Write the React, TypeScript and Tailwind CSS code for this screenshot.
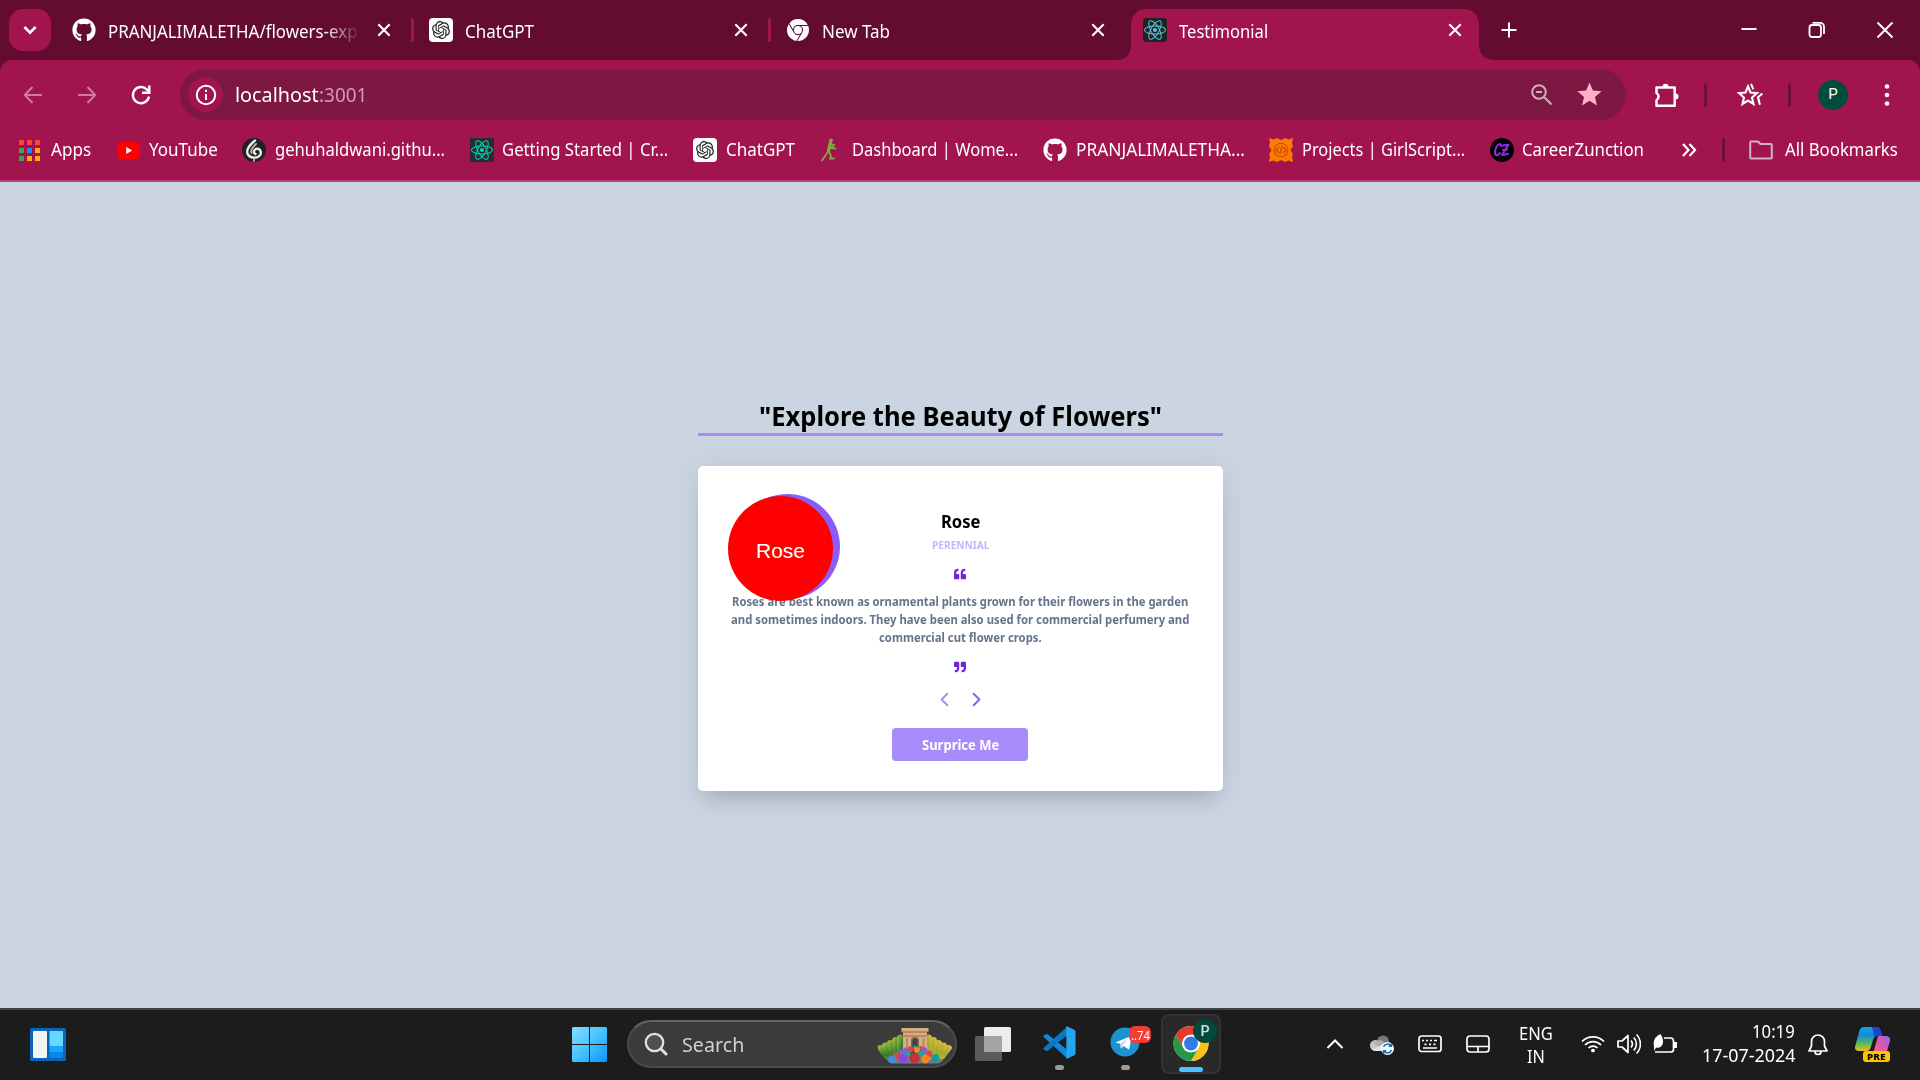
import { useLayoutEffect, useRef, type ReactNode } from "react";
import { SiOpenai, SiGooglechrome, SiReact } from "react-icons/si";
import { FaGithub, FaQuoteLeft, FaQuoteRight } from "react-icons/fa";
import { FiChevronLeft, FiChevronRight } from "react-icons/fi";
import { MdStar } from "react-icons/md";

/** Single line of text condensed or widened to a given width. */
function Fit({ w, className = "", children }: { w: number; className?: string; children: ReactNode }) {
  const ref = useRef<HTMLSpanElement>(null);
  useLayoutEffect(() => {
    const el = ref.current;
    if (el) el.style.transform = `scaleX(${w / el.offsetWidth})`;
  }, [w]);
  return (
    <span className={`block shrink-0 whitespace-nowrap ${className}`} style={{ width: w }}>
      <span ref={ref} className="inline-block origin-left">{children}</span>
    </span>
  );
}

function Close() {
  return (
    <svg className="size-[18px] shrink-0" viewBox="0 0 18 18" fill="none" stroke="#fff" strokeWidth="2.1">
      <path d="M3.3 3.3 14.7 14.7M14.7 3.3 3.3 14.7" />
    </svg>
  );
}

function OpenAi() {
  return (
    <span className="flex size-6 shrink-0 items-center justify-center rounded bg-white">
      <SiOpenai className="size-[18px] text-[#222]" />
    </span>
  );
}

function Tab({ icon, w, title, fade }: { icon: ReactNode; w: number; title: string; fade?: boolean }) {
  return (
    <div className="flex w-[321px] shrink-0 items-center">
      {icon}
      <div className={fade ? "ml-3 flex-1 [mask-image:linear-gradient(90deg,#000_86%,transparent_101%)]" : "ml-3 flex-1"}>
        <Fit w={w} className="mt-[2px] text-[17.5px] leading-6">{title}</Fit>
      </div>
      <div className={fade ? "ml-[17px] flex" : "flex"}><Close /></div>
    </div>
  );
}

function TabDivider() {
  return <div className="mr-[15px] ml-[18px] h-6 w-[3px] shrink-0 rounded-full bg-[#a1144d]" />;
}

function Bookmark({ className, icon, w, label }: { className: string; icon: ReactNode; w: number; label: string }) {
  return (
    <div className={`flex shrink-0 items-center ${className}`}>
      {icon}
      <Fit w={w} className="mb-[2px] text-[17.5px] leading-6">{label}</Fit>
    </div>
  );
}

const appColors = ["#ff4136", "#ff4136", "#ff4136", "#34a853", "#1a8cff", "#fbaf00", "#34a853", "#fbaf00", "#fbaf00"];

function TabStrip() {
  return (
    <div className="flex h-[60px] items-center bg-[#630c30] pl-[9px] text-white">
      <div className="mr-[21px] flex size-[42px] shrink-0 items-center justify-center rounded-[14px] bg-[#a1144d]">
        <svg className="size-[18px]" viewBox="0 0 18 18" fill="none" stroke="#fff" strokeWidth="2.6"><path d="m3.4 6 5.6 5.6L14.600 6" /></svg>
      </div>
      <Tab icon={<FaGithub className="size-6 shrink-0" />} w={250} title="PRANJALIMALETHA/flowers-exp" fade />
      <TabDivider />
      <Tab icon={<OpenAi />} w={69} title="ChatGPT" />
      <TabDivider />
      <Tab icon={<span className="flex size-6 shrink-0 items-center"><SiGooglechrome className="ml-px size-[22px]" /></span>} w={68} title="New Tab" />
      <svg className="ml-2 size-4 shrink-0 self-end" viewBox="0 0 16 16"><path d="M16 0v16H0Q16 16 16 0Z" fill="#a1144d" /></svg>
      <div className="flex h-[51px] w-[348px] shrink-0 self-end rounded-t-[15px] bg-[#a1144d] pb-[9px] pl-3">
        <Tab
          icon={<span className="flex size-6 shrink-0 items-center justify-center rounded-[3px] bg-[#222]"><SiReact className="size-[22px] text-[#58c4dc]" /></span>}
          w={89}
          title="Testimonial"
        />
      </div>
      <svg className="size-4 shrink-0 self-end" viewBox="0 0 16 16"><path d="M0 0v16h16Q0 16 0 0Z" fill="#a1144d" /></svg>
      <svg className="ml-[5px] size-[18px] shrink-0" viewBox="0 0 18 18" fill="none" stroke="#fff" strokeWidth="2"><path d="M9 1.500v15M1.500 9h15" /></svg>
      <div className="ml-auto flex items-center gap-[50px] pr-[26px]">
        <svg className="size-[18px]" viewBox="0 0 18 18" fill="none" stroke="#fff" strokeWidth="2"><path d="M1.500 8h15" /></svg>
        <svg className="size-[18px]" viewBox="0 0 18 18" fill="none" stroke="#fff" strokeWidth="1.800"><rect x="1.500" y="4" width="11.500" height="12" rx="2.500" /><path d="M4.500 1.800h7.500a4 4 0 0 1 4 4V13" /></svg>
        <svg className="size-[18px]" viewBox="0 0 18 18" fill="none" stroke="#fff" strokeWidth="1.900"><path d="m1.500 1.500 15 15M16.500 1.500l-15 15" /></svg>
      </div>
    </div>
  );
}

function Toolbar() {
  return (
    <div className="flex h-[69px] items-center text-white">
      <svg className="ml-[21px] size-6 shrink-0" viewBox="0 0 24 24" fill="none" stroke="#d07c9e" strokeWidth="2"><path d="M21 12H4M11.500 4 3.800 12l7.700 8" /></svg>
      <svg className="ml-[30px] size-6 shrink-0" viewBox="0 0 24 24" fill="none" stroke="#d07c9e" strokeWidth="2"><path d="M3 12h17M12.500 4l7.700 8-7.700 8" /></svg>
      <svg className="ml-[30px] size-6 shrink-0" viewBox="0 0 24 24" fill="none" stroke="#fff" strokeWidth="2.400"><path d="M20 13.500a8.100 8.100 0 1 1-2.300-7.200L20 8.600" /><path d="M20.300 2.500v7.300H13" /></svg>
      <div className="ml-[27px] flex h-[51px] w-[1446px] shrink-0 items-center rounded-full bg-[#7d1842] pl-[8px]">
        <div className="flex size-[35px] items-center justify-center rounded-full bg-[#a1144d]">
          <svg className="size-[22px]" viewBox="0 0 22 22" fill="none" stroke="#fff" strokeWidth="2"><circle cx="11" cy="11" r="9.200" /><path d="M11 10v6M11 5.800v2.300" /></svg>
        </div>
        <Fit w={84} className="mb-px ml-3 text-[20.500px] leading-7">localhost</Fit>
        <Fit w={48} className="mb-px text-[20.500px] leading-7 text-[#d29bb4]">:3001</Fit>
        <svg className="ml-auto size-6" viewBox="0 0 24 24" fill="none" stroke="#cbb0bd" strokeWidth="2"><circle cx="9" cy="9" r="6.800" /><path d="m14 14 7.500 7.500M6 9h6" /></svg>
        <MdStar className="mr-[22px] ml-[21px] size-[29px] text-[#ffafc8]" />
      </div>
      <svg className="ml-[29px] size-6 shrink-0" viewBox="0 0 24 24" fill="none" stroke="#fff" strokeWidth="2.500" strokeLinejoin="round">
        <path d="M1.500 4.500h18.200v18.200H1.500v-5.500a4.200 4.200 0 0 0 0-7.200Z" />
        <path d="M7.500 4a3 3.200 0 0 1 6 0ZM20.500 10.500a3 3 0 0 1 0 6Z" fill="#fff" stroke="none" />
      </svg>
      <div className="ml-[25px] h-6 w-[3px] rounded-full bg-[#6f0f39]" />
      <svg className="ml-[28px] size-7 shrink-0" viewBox="0 0 28 28" fill="none" stroke="#fff" strokeWidth="2.100">
        <path d="m13 5.500 2.500 6 6.500.6-5 4.400 1.500 6.500-5.500-3.500L7.500 23 9 16.500l-5-4.400 6.500-.6Z" /><path d="m16 2.800 2.300 5.500M27.300 12.500l-4.300 3.800 1.900 7.500" />
      </svg>
      <div className="ml-[25px] h-6 w-[3px] rounded-full bg-[#6f0f39]" />
      <div className="ml-[27px] flex size-[30px] items-center justify-center rounded-full bg-[#004d40] pb-px font-[Roboto] text-[15px]">P</div>
      <svg className="ml-[34px] h-6 w-[10px]" viewBox="0 0 10 24" fill="#fff"><circle cx="5" cy="3.500" r="2.300" /><circle cx="5" cy="12" r="2.300" /><circle cx="5" cy="20.500" r="2.300" /></svg>
    </div>
  );
}

function Bookmarks() {
  return (
    <div className="flex h-[51px] items-center pb-[9px] text-white">
      <Bookmark
        className="ml-[19px] gap-[11px]"
        w={40}
        label="Apps"
        icon={
          <span className="grid grid-cols-3 gap-[3px]">
            {appColors.map((c, i) => <span key={i} className="size-[5px]" style={{ background: c }} />)}
          </span>
        }
      />
      <Bookmark
        className="ml-[26px] gap-[9px]"
        w={69}
        label="YouTube"
        icon={<svg className="h-[17px] w-[23px]" viewBox="0 0 23 17"><rect width="23" height="17" rx="4" fill="#f00" /><path d="m9.200 5 6 3.500-6 3.500Z" fill="#fff" /></svg>}
      />
      <Bookmark
        className="ml-[24px] gap-[9px]"
        w={170}
        label="gehuhaldwani.githu..."
        icon={
          <svg className="size-6" viewBox="0 0 24 24" fill="none" strokeLinecap="round">
            <circle cx="12" cy="12" r="12" fill="#222" />
            <path d="M13 2.500C7.500 7 4 11 5.500 15.500c1.500 4.500 9 5.500 12 2.300 2.800-3 .8-7.500-2.800-7-3.200.5-3.700 4.500-1.200 5.200" stroke="#ececec" strokeWidth="2.400" />
            <path d="M14 6c-3 3-6 6-4.500 9M12 20.500v2.500" stroke="#b5b5b5" strokeWidth="1.800" />
          </svg>
        }
      />
      <Bookmark
        className="ml-[25px] gap-2"
        w={166}
        label="Getting Started | Cr..."
        icon={<span className="flex size-6 items-center justify-center bg-[#282c34]"><SiReact className="size-[22px] text-[#09d3ac]" /></span>}
      />
      <Bookmark className="ml-[25px] gap-[9px]" w={69} label="ChatGPT" icon={<OpenAi />} />
      <Bookmark
        className="ml-[25px] gap-[11px]"
        w={166}
        label="Dashboard | Wome..."
        icon={
          <svg className="h-6 w-[21px]" viewBox="0 0 21 24" fill="none" stroke="#83a83e" strokeLinecap="round">
            <path d="M10.500 2.200h1" strokeWidth="3" /><path d="M10.500 5 8.500 13" strokeWidth="3.500" /><path d="M8.500 13 2 22.500M9 14l2 3.500-1 3h4M10 6l4 1-2.500 3 4 .5" strokeWidth="1.800" />
          </svg>
        }
      />
      <Bookmark className="ml-[25px] gap-[9px]" w={169} label="PRANJALIMALETHA..." icon={<FaGithub className="size-6" />} />
      <Bookmark
        className="ml-[24px] gap-[9px]"
        w={163}
        label="Projects | GirlScript..."
        icon={
          <svg className="size-6" viewBox="0 0 24 24" fill="#ff7a00">
            <path d="m0 0 4.500 1.500L8 0l4 2 4-2 3.500 1.500L24 0l-1 5 1 3-2.500 4 2.500 4-1 3 1 5-4.500-1.500L16 24l-4-2-4 2-3.500-1.500L0 24l1-5-1-3 2.500-4L0 8l1-3Z" />
            <circle cx="12" cy="12" r="6.800" fill="none" stroke="#c94f00" strokeWidth="1.100" /><path d="m10 9-3 3 3 3M14 9l3 3-3 3M13 8l-2 8" fill="none" stroke="#c94f00" strokeWidth="1.300" />
          </svg>
        }
      />
      <Bookmark
        className="ml-[25px] gap-2"
        w={122}
        label="CareerZunction"
        icon={
          <svg className="size-6" viewBox="0 0 24 24" fill="none" stroke="#8e2be8" strokeWidth="2" strokeLinecap="round" strokeLinejoin="round">
            <circle cx="12" cy="12" r="12" fill="#000" stroke="none" /><path d="M11 8c0-3-3-2-4 0-2 3-3 8-1 9 1.500.7 3-.5 4-2M12.500 7.500l6-.8L12 17l6-1M13 12l4-.5" />
          </svg>
        }
      />
      <svg className="ml-[37px] size-4" viewBox="0 0 16 16" fill="none" stroke="#fff" strokeWidth="2.200"><path d="m2 2 5.500 6L2 14M8.500 2 14 8l-5.500 6" /></svg>
      <div className="ml-[25px] h-6 w-[3px] rounded-full bg-[#6f0f39]" />
      <Bookmark
        className="ml-[24px] gap-3"
        w={113}
        label="All Bookmarks"
        icon={<svg className="h-[20px] w-6" viewBox="0 0 24 20" fill="none" stroke="#cfb3c0" strokeWidth="2" strokeLinejoin="round"><path d="M1.200 3.500V17.500q0 1 1 1h19.600q1 0 1-1V5q0-1-1-1H11.500L9 1.500H2.200q-1 0-1 1Z" /></svg>}
      />
    </div>
  );
}

function Page() {
  return (
    <main className="flex h-[826px] flex-col items-center bg-[#cbd5e1]">
      <div className="mt-[215px] flex h-[39px] w-[525px] justify-center border-b-[3px] border-[#a78bfa]">
        <Fit w={403} className="text-[27px] leading-[37px] font-bold text-black">"Explore the Beauty of Flowers"</Fit>
      </div>
      <section className="relative mt-[30px] flex h-[325px] w-[525px] flex-col items-center rounded-[5px] bg-white shadow-[0_16px_18px_-9px_rgba(0,0,0,0.12),0_5px_26px_rgba(30,60,90,0.13)]">
        <div className="absolute top-[28px] left-[37px] z-10 size-[105px] rounded-full bg-[#8b5cf6]">
          <div className="relative top-[2px] -left-[7px] flex size-[105px] items-center justify-center rounded-full bg-[#f00] pt-[4px] pl-px font-['Liberation_Sans'] text-[21px] text-white">Rose</div>
        </div>
        <Fit w={39} className="mt-[44px] text-[17px] leading-6 font-bold text-black">Rose</Fit>
        <Fit w={57} className="mt-[3px] text-[10.500px] leading-4 font-bold text-[#c4b5fd]">PERENNIAL</Fit>
        <FaQuoteLeft className="mt-[15px] size-3 text-[#6d28d9]" />
        <div className="mt-[13px] flex flex-col items-center text-[12px] leading-[18px] font-bold text-[#64748b]">
          <Fit w={456}>Roses are best known as ornamental plants grown for their flowers in the garden</Fit>
          <Fit w={458}>and sometimes indoors. They have been also used for commercial perfumery and</Fit>
          <Fit w={163}>commercial cut flower crops.</Fit>
        </div>
        <FaQuoteRight className="mt-[14px] size-3 text-[#6d28d9]" />
        <div className="mt-[15px] flex gap-[9px]">
          <FiChevronLeft className="size-[23px] text-[#a78bfa]" />
          <FiChevronRight className="size-[23px] text-[#8b5cf6]" />
        </div>
        <div className="mt-[17px] flex h-[33px] w-[136px] items-center justify-center rounded bg-[#a78bfa]">
          <Fit w={77} className="text-[13.500px] leading-5 font-bold text-white">Surprice Me</Fit>
        </div>
      </section>
    </main>
  );
}

function BloomArt() {
  const tops = [18, 15.500, 13, 10, 7.500];
  const balls: [number, number, number, string][] = [
    [33, 21, 2, "#d84a4a"], [38, 20.500, 2, "#2aa198"], [44, 21, 2, "#d84a4a"], [29, 23, 2.500, "#8b5fd0"], [34, 23, 2.500, "#d84a4a"], [40, 23, 3, "#ff8a1e"],
    [47, 23, 3, "#8b5fd0"], [25, 25.500, 3, "#8b5fd0"], [31, 27, 3, "#2aa198"], [44, 27, 3.500, "#2aa198"], [52, 27, 3.500, "#d84a4a"], [19, 29, 3.500, "#d84a4a"],
    [15, 32.500, 3.800, "#3a8fe0"], [26, 31.500, 4.600, "#8e44e0"], [37.500, 31, 5.300, "#c93035"], [48.500, 32, 4.300, "#ff851b"], [58.500, 31, 3.900, "#1a9a96"],
  ];
  return (
    <svg className="mt-1 h-[38px] w-[76px]" viewBox="0 0 76 38">
      <defs>
        <linearGradient id="gl" x1="0" y1="0" x2="1" y2="1"><stop stopColor="#b9c23a" /><stop offset=".6" stopColor="#2c7a33" /><stop offset="1" stopColor="#70a33a" /></linearGradient>
        <linearGradient id="gr" x1="1" y1="0" x2="0" y2="1"><stop stopColor="#e6c23c" /><stop offset=".5" stopColor="#a3a632" /><stop offset="1" stopColor="#c6c13a" /></linearGradient>
        <clipPath id="bowl"><path d="M0 0H76V17Q75 29 62 36.500H14Q1 29 0 17Z" /></clipPath>
      </defs>
      <g clipPath="url(#bowl)">
        <path d="M10 27h56v10H10Z" fill="#6f7b8c" />
        {tops.map((y, i) => (
          <g key={i}>
            <path d={`M${i * 5} ${y + 3.500}a3.500 3.500 0 0 1 7 0L${i * 3 + 15} 32H${i * 3 + 8}Z`} fill="url(#gl)" />
            <path d={`M${75 - i * 5} ${y + 3.500}a3.500 3.500 0 0 0-7 0L${60 - i * 3} 32H${67 - i * 3}Z`} fill="url(#gr)" />
          </g>
        ))}
      </g>
      <path d="M24.500 1h27v4h-27ZM26 5h24v17H26Z" fill="#d9ad82" />
      <path d="M24.500 5h27M26 9h24" stroke="#936444" strokeWidth="1" />
      <path d="M34 22V13q0-3 4-3t4 3v9Z" fill="#8a6347" /><path d="M35.500 22V14q0-2.500 2.500-2.500t2.500 2.500v8Z" fill="#38434b" />
      <path d="M30 11v10M46.500 11v10" stroke="#b98a62" strokeWidth="2" />
      {balls.map(([x, y, r, c], i) => <circle key={i} cx={x} cy={y} r={r} fill={c} />)}
    </svg>
  );
}

function Chrome() {
  return (
    <svg className="size-9" viewBox="0 0 48 48">
      <circle cx="24" cy="24" r="24" fill="#fff" />
      <path d="M3.200 12A24 24 0 0 1 44.800 12H24a12 12 0 0 0-10.400 18Z" fill="#e33b2e" />
      <path d="M44.800 12A24 24 0 0 1 24 48L34.400 30A12 12 0 0 0 34.400 18 12 12 0 0 0 24 12Z" fill="#fbc116" />
      <path d="M24 48A24 24 0 0 1 3.200 12L13.600 30A12 12 0 0 0 34.400 30Z" fill="#279847" />
      <circle cx="24" cy="24" r="12" fill="#fff" /><circle cx="24" cy="24" r="9.500" fill="#2f7bea" />
    </svg>
  );
}

function Taskbar() {
  return (
    <footer className="flex h-[72px] items-center border-t-2 border-[#404246] bg-[#1c1c1c] text-white">
      <svg className="mb-px ml-[30px] h-[33px] w-9 shrink-0" viewBox="0 0 36 33">
        <rect width="36" height="33" rx="1.500" fill="#0a64b8" /><rect x="3" y="3" width="14" height="27" rx="1" fill="#f4f4f4" />
        <path d="M19.500 3H33v15H19.500Z" fill="#66d8ff" /><path d="M19.500 18H33v6H19.500Z" fill="#1ba4fb" /><path d="M19.500 24H33v6H19.500Z" fill="#0a85ec" />
      </svg>
      <svg className="mb-px ml-[506px] size-[35px] shrink-0" viewBox="0 0 35 35">
        <defs><linearGradient id="win" x1="0" y1="0" x2="1" y2="1"><stop stopColor="#86dcff" /><stop offset=".5" stopColor="#46c4ff" /><stop offset="1" stopColor="#0a93ff" /></linearGradient></defs>
        <path d="M1.500 0H17v17H0V1.500Q0 0 1.500 0ZM18 0h15.500Q35 0 35 1.500V17H18ZM0 18h17v17H1.500Q0 35 0 33.500ZM18 18h17v15.500q0 1.500-1.500 1.500H18Z" fill="url(#win)" />
      </svg>
      <div className="mb-[2px] ml-5 flex h-12 w-[330px] shrink-0 items-center rounded-full border-2 border-[#4a4a4a] border-t-[#636363] bg-[#3b3b3b] pl-[15px]">
        <svg className="size-6 shrink-0" viewBox="0 0 24 24" fill="none" stroke="#e0e0e0" strokeWidth="2.300" strokeLinecap="round"><circle cx="10.500" cy="10.500" r="8.700" fill="#4b5053" /><path d="m17 17 5 5" strokeWidth="3" /></svg>
        <Fit w={62} className="mt-px ml-[14px] text-[20px] leading-6 text-[#d0d0d0]">Search</Fit>
        <div className="mr-[2px] ml-auto"><BloomArt /></div>
      </div>
      <svg className="mb-[2px] ml-[18px] h-[34px] w-9 shrink-0" viewBox="0 0 36 34">
        <rect x="9" width="27" height="25" rx="1.500" fill="#ececec" /><rect y="9" width="27" height="25" rx="1.500" fill="#5b5b5b" /><path d="M9 9h18v16H9Z" fill="#a4a4a4" />
      </svg>
      <div className="ml-[30px] flex h-[60px] w-9 shrink-0 flex-col items-center self-start pt-4">
        <svg className="size-9" viewBox="0 0 36 36">
          <path d="M.6 11.500 3.500 9q1.200-.8 2.500.2L27 26v9.500Z" fill="#1187d8" /><path d="M.6 24.500 3.500 27q1.200.8 2.500-.2L27 10V.5Z" fill="#0878c6" /><path d="m26 0 8.600 4q1.400.8 1.400 2v24q0 1.200-1.400 2L26 36Z" fill="#24a5f2" />
        </svg>
        <div className="mt-[6px] h-[5px] w-[9px] shrink-0 rounded-full bg-[#9a9a9a]" />
      </div>
      <div className="relative ml-8 flex h-[60px] w-8 shrink-0 flex-col items-center self-start pt-[17px]">
        <svg className="h-[33px] w-8" viewBox="0 0 32 33"><circle cx="16" cy="16.500" r="16" fill="#1c93d1" /><path d="M5.500 17 23.500 9.500 20.500 25l-6-4-3 3-.7-5.500Z" fill="#fff" /><path d="m11.500 18 8.500-6-6.500 7.500-2 4Z" fill="#bcd7e8" /></svg>
        <div className="mt-[8px] h-[5px] w-[9px] shrink-0 rounded-full bg-[#9a9a9a]" />
        <div className="absolute top-4 left-5 flex h-[17px] w-[22px] items-center justify-center rounded-[6px] bg-[#f23c34]"><Fit w={19} className="text-[13px] leading-4">..74</Fit></div>
      </div>
      <div className="relative mt-1 ml-5 flex size-[60px] shrink-0 flex-col items-center self-start rounded-lg border-2 border-[#343434] bg-[#292929] pt-[10px]">
        <Chrome />
        <div className="mt-[6px] h-[5px] w-6 shrink-0 rounded-full bg-[#4cc2ff]" />
        <div className="absolute top-[3px] left-[30px] flex size-6 items-center justify-center rounded-full bg-[#02483c] font-[Roboto] text-[14px] font-medium text-[#cfe0dc]">P</div>
      </div>
      <svg className="mb-[2px] ml-[105px] h-[10px] w-[18px] shrink-0" viewBox="0 0 18 10" fill="none" stroke="#fff" strokeWidth="2"><path d="m1.500 9 7.500-7.500L16.500 9" /></svg>
      <svg className="ml-[26px] h-5 w-6 shrink-0" viewBox="0 0 24 20">
        <circle cx="13" cy="6.500" r="6" fill="#777" /><circle cx="5.500" cy="10.500" r="5.500" fill="#c8c8c8" /><path d="m2 7 9-2 8 6-8 3Z" fill="#b0b0b0" /><path d="m2 14.500 11-5 5 6.500H5.500Z" fill="#e4e4e4" />
        <circle cx="17.500" cy="13.500" r="6.500" fill="#fff" /><path d="M13.500 12a4.300 4.300 0 0 1 7.500-1.200M21.500 15a4.300 4.300 0 0 1-7.500 1.200M21.500 8.500v2.800h-2.800M13.500 18.500v-2.800h2.800" fill="none" stroke="#1268b8" strokeWidth="1.500" />
      </svg>
      <svg className="mb-[2px] ml-6 h-[18px] w-6 shrink-0" viewBox="0 0 24 18" fill="none" stroke="#fff" strokeWidth="1.700"><rect x="1" y="1" width="22" height="15.500" rx="2.500" /><path d="M4 5.500h2M8 5.500h2M12 5.500h2M16 5.500h3M6.500 9.300h2M11 9.300h2M15.500 9.300h2M5 13h14" /></svg>
      <svg className="mb-[2px] ml-6 h-[18px] w-6 shrink-0" viewBox="0 0 24 18" fill="none" stroke="#fff" strokeWidth="1.700"><rect x="1" y="1" width="22" height="16" rx="3" /><path d="M1 11.500h22M12 11.500V17" /></svg>
      <div className="ml-[29px] flex w-[34px] shrink-0 flex-col items-center text-[18px] leading-[23px]"><Fit w={34}>ENG</Fit><Fit w={18}>IN</Fit></div>
      <svg className="mb-[2px] ml-[28px] h-[18px] w-6 shrink-0" viewBox="0 0 24 18" fill="none" stroke="#fff" strokeWidth="1.700"><path d="M1 6.500a15.500 15.500 0 0 1 22 0M4 10a11.300 11.300 0 0 1 16 0M7.500 13a6.500 6.500 0 0 1 9 0" /><circle cx="12" cy="15.500" r="1.500" fill="#fff" stroke="none" /><circle cx="12" cy="15.500" r="1" /></svg>
      <svg className="mb-[2px] ml-3 h-[22px] w-6 shrink-0" viewBox="0 0 24 22" fill="none" stroke="#fff" strokeWidth="1.700" strokeLinejoin="round"><path d="M1 8h4l6-5.500v17L5 14H1ZM14 7.500a5.500 5.500 0 0 1 0 7M16.800 4.500a9.500 9.500 0 0 1 0 13M19.500 1.500a13.500 13.500 0 0 1 0 19" /></svg>
      <svg className="mb-[4px] ml-3 h-[21px] w-6 shrink-0" viewBox="0 0 24 21" fill="none" stroke="#fff" strokeWidth="1.700"><path d="M11 5h6.500q3 0 3 3v8.500q0 2.500-3 2.500H2" /><path d="M21 9.500h3v5h-3" fill="#fff" strokeWidth="1" /><path d="M1 13Q-1 5 7.500 1q3.500 5 2.200 10Q8 15.500 3 14.500L1 18Z" fill="#fff" stroke="none" /></svg>
      <div className="mb-[4px] ml-[25px] flex w-[93px] shrink-0 flex-col items-end text-[17.500px] leading-6"><Fit w={43}>10:19</Fit><Fit w={93}>17-07-2024</Fit></div>
      <svg className="mb-[2px] ml-[13px] h-[23px] w-5 shrink-0" viewBox="0 0 20 23" fill="none" stroke="#fff" strokeWidth="1.700" strokeLinejoin="round"><path d="M3.500 13V8.500a6.500 6.500 0 0 1 13 0V13l2.500 5H1ZM7 18.500a3 3 0 0 0 6 0" /></svg>
      <div className="relative mb-[2px] ml-[27px] h-[35px] w-9 shrink-0">
        <svg className="h-[35px] w-9" viewBox="0 0 36 35">
          <defs>
            <linearGradient id="cpa" x1="0" y1="0" x2="0" y2="1"><stop stopColor="#139ef0" /><stop offset=".35" stopColor="#158bd4" /><stop offset=".7" stopColor="#5ebc5d" /><stop offset="1" stopColor="#f4bd08" /></linearGradient>
            <linearGradient id="cpb" x1="1" y1="0" x2="0" y2="1"><stop stopColor="#9a62f2" /><stop offset=".5" stopColor="#dc58ac" /><stop offset="1" stopColor="#ff6b55" /></linearGradient>
          </defs>
          <path d="M9 0h12q3.500 0 4.700 4L27 9h-5q-3 0-4 4l-2.500 8q-1 3-4 3H4q-5 0-3.700-5L4 5Q5.300 0 9 0Z" fill="url(#cpa)" />
          <path d="M17 0h4.500q3 0 4.200 4L27 9h-5q-1.500 0-2.500 1.500Z" fill="#1745cf" />
          <path d="M23 9h7q6 0 5 5l-3 10q-.8 3-5 3h-9Z" fill="url(#cpb)" />
        </svg>
        <div className="absolute top-[24px] left-2 flex h-[11px] w-[27px] items-center justify-center rounded-[3px] bg-[#ffc400]"><Fit w={19} className="text-[9.500px] leading-[11px] font-extrabold text-black">PRE</Fit></div>
      </div>
    </footer>
  );
}

export default function App() {
  return (
    <div className="h-[1080px] w-[1920px] overflow-hidden bg-[#630c30] font-['Noto_Sans',sans-serif]">
      <TabStrip />
      <div className="h-[122px] rounded-t-[12px] border-b-2 border-[#b54577] bg-[#a1144d]">
        <Toolbar />
        <Bookmarks />
      </div>
      <Page />
      <Taskbar />
    </div>
  );
}
